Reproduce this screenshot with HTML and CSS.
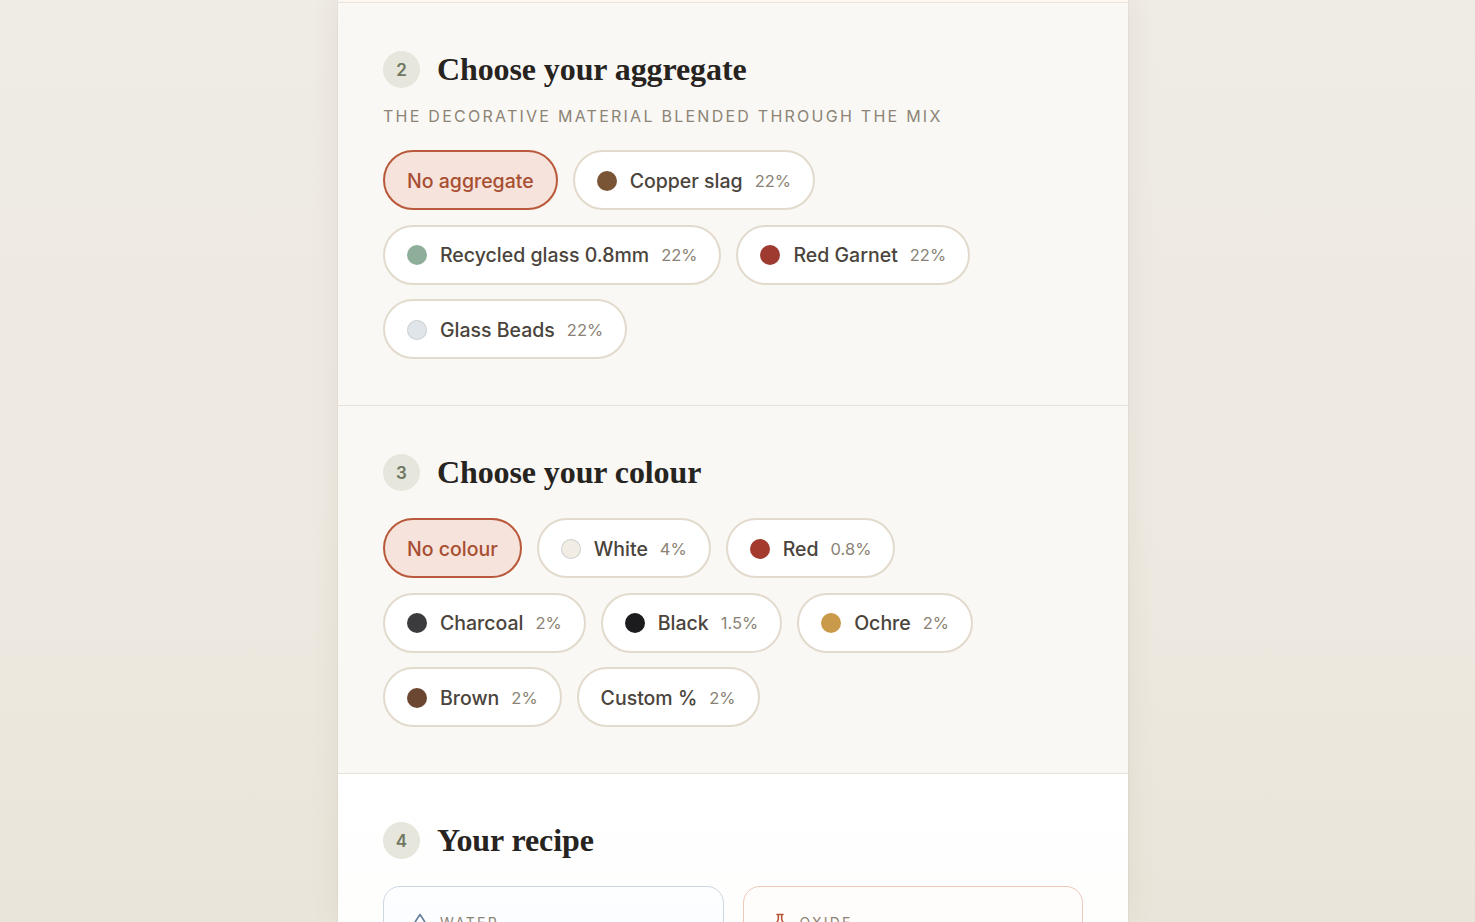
FILE: index.html
```html
<!DOCTYPE html>
<html lang="en">
<head>
  <meta charset="UTF-8">
  <meta name="viewport" content="width=device-width, initial-scale=1.0">
  <title>Terrazzo Mix Builder</title>
  <link rel="stylesheet" href="styles.css">
</head>
<body>

  <main class="panel">
    <div class="prev-end"></div>

    <section class="step">
      <div class="step-head">
        <span class="step-num">2</span>
        <h2>Choose your aggregate</h2>
      </div>
      <p class="step-sub">The decorative material blended through the mix</p>
      <div class="chips">
        <button class="chip selected">No aggregate</button>
        <button class="chip"><span class="dot" style="background:#7a5535"></span>Copper slag <em>22%</em></button>
        <button class="chip"><span class="dot" style="background:#8fae9a"></span>Recycled glass 0.8mm <em>22%</em></button>
        <button class="chip"><span class="dot" style="background:#9e3a30"></span>Red Garnet <em>22%</em></button>
        <button class="chip"><span class="dot light" style="background:#dfe5e8"></span>Glass Beads <em>22%</em></button>
      </div>
    </section>

    <section class="step">
      <div class="step-head">
        <span class="step-num">3</span>
        <h2>Choose your colour</h2>
      </div>
      <div class="chips">
        <button class="chip selected">No colour</button>
        <button class="chip"><span class="dot light" style="background:#f1ece4"></span>White <em>4%</em></button>
        <button class="chip"><span class="dot" style="background:#a33a2d"></span>Red <em>0.8%</em></button>
        <button class="chip"><span class="dot" style="background:#3b3a3c"></span>Charcoal <em>2%</em></button>
        <button class="chip"><span class="dot" style="background:#1c1b1d"></span>Black <em>1.5%</em></button>
        <button class="chip"><span class="dot" style="background:#c99a4a"></span>Ochre <em>2%</em></button>
        <button class="chip"><span class="dot" style="background:#6b4630"></span>Brown <em>2%</em></button>
        <button class="chip">Custom % <em>2%</em></button>
      </div>
    </section>

    <section class="step recipe">
      <div class="step-head">
        <span class="step-num">4</span>
        <h2>Your recipe</h2>
      </div>
      <div class="recipe-grid">
        <div class="recipe-card water">
          <div class="card-label">
            <svg width="16" height="18" viewBox="0 0 16 18" fill="none" stroke="#5f7c96" stroke-width="1.6" stroke-linejoin="round"><path d="M8 1.5 C5 6 2.5 8.8 2.5 11.6 a5.5 5.5 0 0 0 11 0 C13.5 8.8 11 6 8 1.5 Z"/></svg>
            Water
          </div>
        </div>
        <div class="recipe-card oxide">
          <div class="card-label">
            <svg width="16" height="18" viewBox="0 0 16 18" fill="none" stroke="#b5583a" stroke-width="1.6" stroke-linejoin="round" stroke-linecap="round"><path d="M5 1.5 h6 M6.3 1.5 v5 L2.5 15 a1.3 1.3 0 0 0 1.2 1.8 h8.6 a1.3 1.3 0 0 0 1.2 -1.8 L9.7 6.5 v-5"/></svg>
            Oxide
          </div>
        </div>
      </div>
    </section>
  </main>

</body>
</html>
```

FILE: styles.css
```css
html, body {
  height: 100%;
}

body {
  margin: 0;
  padding-right: 9px;
  display: flex;
  justify-content: center;
  overflow: hidden;
  font-family: "Inter", "Noto Sans", sans-serif;
  color: #4e4840;
  background: linear-gradient(180deg, #efebe5 0%, #eeeae2 55%, #eae5da 100%);
}

.panel {
  width: 790px;
  height: 100vh;
  overflow: hidden;
  background-color: #f9f8f4;
  box-shadow: 0 0 0 1px rgba(120, 100, 70, 0.05), 0 0 28px rgba(110, 90, 60, 0.09);
}

.prev-end {
  height: 2px;
  border-bottom: 1px solid #efe3d5;
}

.step {
  padding: 48px 45px 46px;
  border-bottom: 1px solid #e6e2d8;
}

.step-head {
  display: flex;
  align-items: center;
  gap: 17px;
  height: 37px;
}

.step-num {
  width: 37px;
  height: 37px;
  border-radius: 50%;
  background-color: #e6e6dc;
  color: #6f7762;
  font-size: 17px;
  font-weight: 600;
  display: flex;
  align-items: center;
  justify-content: center;
}

.step h2 {
  margin: 0;
  font-family: "Liberation Serif", "Times New Roman", serif;
  font-weight: bold;
  font-size: 32px;
  letter-spacing: -0.1px;
  color: #27241f;
  line-height: 37px;
}

.step-sub {
  margin: 18px 0 24px;
  line-height: 20px;
  font-size: 16px;
  letter-spacing: 2.25px;
  text-transform: uppercase;
  color: #8c8477;
}

.step-head + .chips {
  margin-top: 27px;
}

.chips {
  display: flex;
  flex-wrap: wrap;
  gap: 14.5px 15px;
}

.chip {
  height: 60px;
  display: flex;
  align-items: center;
  gap: 13px;
  padding: 1px 22px 0;
  border: 2px solid #e2dacd;
  border-radius: 30px;
  background-color: #fff;
  font-family: inherit;
  font-size: 19.5px;
  font-weight: 500;
  color: #4a443c;
  cursor: pointer;
}

.chip em {
  font-style: normal;
  font-weight: 400;
  font-size: 16.5px;
  color: #8a8275;
  margin-left: -1px;
}

.chip.selected {
  background-color: #f5e3dc;
  border-color: #b9583a;
  color: #a84e31;
}

.dot {
  width: 20px;
  height: 20px;
  border-radius: 50%;
  flex-shrink: 0;
}

.dot.light {
  box-shadow: inset 0 0 0 1px #cfd3d4;
}

.recipe {
  background: linear-gradient(180deg, #ffffff 0%, #fdfcfa 100%);
  border-bottom: none;
}

.recipe-grid {
  margin-top: 27px;
  display: grid;
  grid-template-columns: 1fr 1fr;
  gap: 19px;
}

.recipe-card {
  height: 140px;
  border-radius: 17px;
  padding: 26px 28px;
}

.recipe-card.water {
  border: 1px solid #cbd7e3;
  background: linear-gradient(180deg, #fdfeff 0%, #f6f9fb 100%);
}

.recipe-card.oxide {
  border: 1px solid #ecc9b9;
  background: linear-gradient(180deg, #fffdfc 0%, #fcf6f2 100%);
}

.card-label {
  display: flex;
  align-items: center;
  gap: 12px;
  font-size: 14px;
  letter-spacing: 2.2px;
  text-transform: uppercase;
  color: #8c8477;
}
```
